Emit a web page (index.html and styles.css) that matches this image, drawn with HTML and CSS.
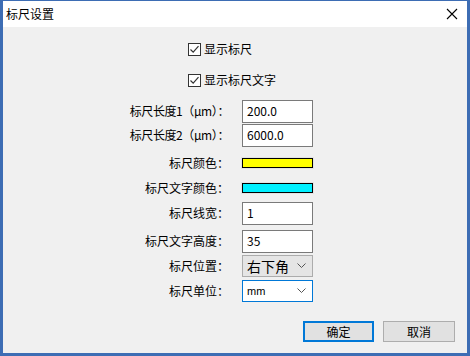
FILE: index.html
```html
<!DOCTYPE html>
<html lang="zh-CN">
<head>
    <meta charset="UTF-8">
    <title>标尺设置</title>
    <link rel="stylesheet" href="styles.css">
</head>
<body>
    <div class="window">
        <!-- 标题栏 -->
        <div class="title-bar">
            <span class="title">标尺设置</span>
            <svg class="close" width="12" height="12" viewBox="0 0 12 12">
                <path d="M1 1 L11 11 M11 1 L1 11" stroke="#000" stroke-width="1.1" fill="none"/>
            </svg>
        </div>

        <div class="client">
            <!-- 复选框 -->
            <label class="check-row first">
                <span class="check-box">
                    <svg width="11" height="11" viewBox="0 0 11 11">
                        <path d="M1.5 5.5 L4.2 8.2 L9.5 2.2" stroke="#333" stroke-width="1.2" fill="none"/>
                    </svg>
                </span>
                显示标尺
            </label>
            <label class="check-row second">
                <span class="check-box">
                    <svg width="11" height="11" viewBox="0 0 11 11">
                        <path d="M1.5 5.5 L4.2 8.2 L9.5 2.2" stroke="#333" stroke-width="1.2" fill="none"/>
                    </svg>
                </span>
                显示标尺文字
            </label>

            <!-- 参数表单 -->
            <div class="form-grid">
                <span class="label long">标尺长度1（μm）：</span>
                <div class="text-box">200.0</div>

                <span class="label long">标尺长度2（μm）：</span>
                <div class="text-box">6000.0</div>

                <span class="label">标尺颜色：</span>
                <div class="swatch yellow"></div>

                <span class="label">标尺文字颜色：</span>
                <div class="swatch cyan"></div>

                <span class="label">标尺线宽：</span>
                <div class="text-box">1</div>

                <span class="label">标尺文字高度：</span>
                <div class="text-box">35</div>

                <span class="label">标尺位置：</span>
                <div class="combo">
                    <span class="combo-text big">右下角</span>
                    <svg width="9" height="6" viewBox="0 0 9 6"><path d="M0.5 0.5 L4.5 4.5 L8.5 0.5" stroke="#555" fill="none"/></svg>
                </div>

                <span class="label">标尺单位：</span>
                <div class="combo focused">
                    <span class="combo-text">mm</span>
                    <svg width="9" height="6" viewBox="0 0 9 6"><path d="M0.5 0.5 L4.5 4.5 L8.5 0.5" stroke="#555" fill="none"/></svg>
                </div>
            </div>

            <!-- 底部按钮 -->
            <div class="buttons">
                <button class="btn default">确定</button>
                <button class="btn">取消</button>
            </div>
        </div>
    </div>
</body>
</html>
```

FILE: styles.css
```css
/* 全局 */
body {
    margin: 0;
    font-family: "Noto Sans CJK SC", "Liberation Sans", sans-serif;
    font-size: 12px;
    color: #000;
    background: #fff;
}

/* 窗口外框 */
.window {
    width: 470px;
    height: 356px;
    box-sizing: border-box;
    border: 3px solid #3d6db4;
    border-top: 1px solid #3d6db4;
    background-color: #f0f0f0;
    display: flex;
    flex-direction: column;
}

.title-bar {
    height: 26px;
    background-color: #fff;
    display: flex;
    align-items: center;
    justify-content: space-between;
    padding: 0 9px 0 3px;
    flex-shrink: 0;
}
.title {
    font-size: 12px;
    line-height: 1;
}
.close {
    display: block;
}

.client {
    flex: 1;
}

/* 复选框行 */
.check-row {
    display: flex;
    align-items: center;
    height: 18px;
    padding-left: 185px;
    line-height: 1;
}
.check-row.first {
    margin-top: 13px;
}
.check-row.second {
    margin-top: 13px;
}
.check-box {
    width: 11px;
    height: 11px;
    border: 1px solid #333;
    background: #fff;
    margin-right: 3px;
    display: flex;
}

/* 表单网格 */
.form-grid {
    display: grid;
    grid-template-columns: 106px 71px;
    grid-template-rows: 24px 24px 32px 18px 32px 24px 26px 24px;
    column-gap: 13px;
    align-items: center;
    margin-top: 10px;
    padding-left: 120px;
}
.label {
    text-align: right;
    white-space: nowrap;
    line-height: 1;
}
.label.long {
    letter-spacing: -0.4px;
}

.text-box {
    height: 23px;
    box-sizing: border-box;
    border: 1px solid #7a7a7a;
    background: #fff;
    padding: 0 4px;
    display: flex;
    align-items: center;
    line-height: 1;
}

.swatch {
    height: 10px;
    box-sizing: border-box;
    border: 1px solid #000;
    box-shadow: 0 0 0 1px #e3e3e3;
}
.yellow { background: #ffff00; }
.cyan { background: #00f0ff; }

.combo {
    height: 22px;
    box-sizing: border-box;
    border: 1px solid #acacac;
    background: #e5e5e5;
    display: flex;
    align-items: center;
    justify-content: space-between;
    padding: 0 6px 0 4px;
}
.combo.focused {
    border-color: #0078d7;
    background: #fff;
}
.combo-text {
    font-family: "Liberation Sans", sans-serif;
    font-size: 11px;
    line-height: 1;
}
.combo-text.big {
    font-family: "Noto Sans CJK SC", sans-serif;
    font-size: 14px;
}

/* 底部按钮 */
.buttons {
    display: flex;
    gap: 9px;
    justify-content: flex-end;
    margin-top: 18px;
    padding-right: 12px;
}
.btn {
    width: 72px;
    height: 21px;
    box-sizing: border-box;
    border: 1px solid #adadad;
    background: #e1e1e1;
    font-family: "Noto Sans CJK SC", sans-serif;
    font-size: 12px;
    padding: 0;
    line-height: 1;
}
.btn.default {
    border: 2px solid #0078d7;
    width: 71px;
}
```
